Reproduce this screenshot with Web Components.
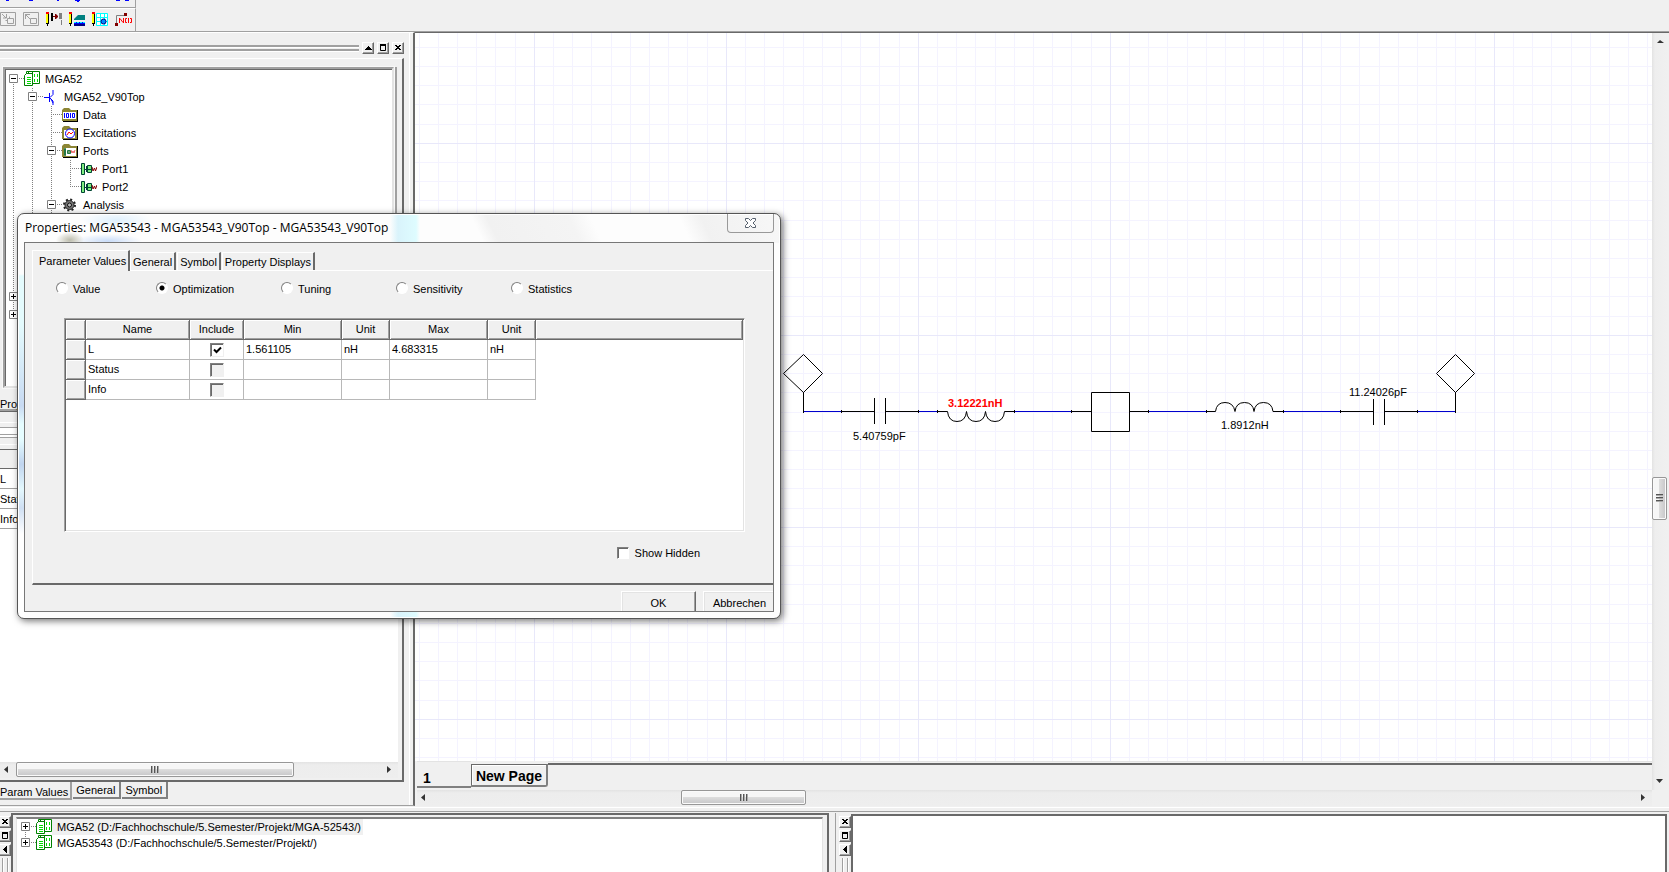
<!DOCTYPE html>
<html lang="de">
<head>
<meta charset="utf-8">
<title>MGA52 - Schematic Editor</title>
<style>
html, body { margin: 0; height: 100%; }
body { overflow: hidden; background: #f0f0f0; color: #000; font: 11px/18px "Liberation Sans", sans-serif; }
</style>
</head>
<body>
<schematic-app></schematic-app>
<script>
const define = (name, html, setup) => {
  const tpl = document.createElement('template');
  tpl.innerHTML = html;
  customElements.define(name, class extends HTMLElement {
    connectedCallback() {
      if (this.shadowRoot) return;
      this.attachShadow({ mode: 'open' }).append(tpl.content.cloneNode(true));
      if (setup) setup.call(this, this.shadowRoot);
    }
  });
};

/* 16px icons used by the trees */
const ICONS = {
  project: `<path fill="#fff" stroke="#008000" d="M2.500 3V.5h13v12H9"/><path fill="#fff" stroke="#008000" d="M.5 4.500l2-2h6v12h-8z"/><path fill="none" stroke="#00e000" d="M3 6.500h4M3 8.500h4M3 10.500h4M3 12.500h4M10.500 3v3M13.500 3v3M10.500 8v3M13.500 8v3"/><path fill="none" stroke="#008000" d="M4.500 2.500V.5h4v4"/>`,
  design: `<path fill="none" stroke="#00f" d="M1 8.500h5M6.500 4v9M7 8.500l3-3V1M7 9l3 3v4M8 10l2 4"/>`,
  data: `<path fill="#8c8534" d="M0 3L2 1h5l2 2h6v11H0z"/><path fill="#fff" d="M1 5h13v7H1z"/><path stroke="#000" fill="none" d="M15.500 3v12M1 14.500h15"/><path fill="none" stroke="#00f" d="M2.500 6v5M4.500 6.500h2v4h-2zM8.500 6v5M10.500 6.500h2v4h-2z"/>`,
  excite: `<path fill="#8c8534" d="M0 3L2 1h5l2 2h6v11H0z"/><path fill="#fff" d="M2 5h11v8H2z"/><path stroke="#000" fill="none" d="M15.500 3v12M1 14.500h15"/><circle cx="8" cy="8.500" r="4.500" fill="#fff" stroke="#00f"/><path fill="none" stroke="#f00" d="M5 10l2-3 2 2 2-2"/>`,
  ports: `<path fill="#8c8534" d="M0 3L2 1h5l2 2h6v11H0z"/><path fill="#fff" d="M2 5h12v8H2z"/><path stroke="#000" fill="none" d="M15.500 3v12M1 14.500h15"/><path fill="#6c9f6c" stroke="#274" d="M2.500 5.500h1v7h-1zM5.500 7.500h3v3h-3z"/><path fill="none" stroke="#e66" d="M9 7l1 3 1-2 1 2 1-3"/>`,
  port: `<path fill="#7fef7f" stroke="#043" d="M.5 2.500h3v11h-3z"/><path stroke="#043" d="M4 8.500h2"/><path fill="#7fef7f" stroke="#043" d="M6.500 4.500h4v7h-4z"/><path stroke="#043" fill="none" d="M5.500 5v6M6 8.500h4"/><path fill="none" stroke="#800000" d="M11 6l1 4 1.500-3 1 3L16 6"/>`,
  gear: `<circle cx="7.500" cy="8" r="5.500" fill="none" stroke="#222" stroke-width="2" stroke-dasharray="2 2.320"/><circle cx="7.500" cy="8" r="4.500" fill="#777" stroke="#222"/><circle cx="7.500" cy="8" r="2" fill="#bbb" stroke="#111"/>`
};
const svg = (w, h, body) => `<svg width="${w}" height="${h}" viewBox="0 0 ${w} ${h}">${body}</svg>`;

/* ---------- small parts ---------- */
define('cap-button', `<style>
:host { display: block; width: 12px; height: 12px; }
button { box-sizing: border-box; display: block; width: 12px; height: 12px; padding: 0; background: #f0f0f0; border: 1px solid; border-color: #fff #696969 #696969 #fff; box-shadow: inset -1px -1px #a0a0a0; }
svg { display: block; }
</style><button type="button"></button>`, function (r) {
  const shapes = {
    up: '<path d="M5 3h1v1h1v1h1v1h1v1H2V6h1V5h1V4h1z"/>',
    max: '<path fill="none" stroke="#000" d="M2.500 2.500h5v5h-5z"/><path d="M2 1h6v2H2z"/>',
    close: '<path d="M2 2h2v1h2V2h2v1H7v1H6v1h1v1h1v1H6V6H4v1H2V6h1V5h1V4H3V3H2z"/>',
    left: '<path d="M7 1v7H6V7H5V6H4V5H3V4h1V3h1V2h1V1z"/>'
  };
  const b = r.querySelector('button');
  b.setAttribute('aria-label', this.getAttribute('kind'));
  b.innerHTML = svg(10, 10, shapes[this.getAttribute('kind')]);
});

define('scroll-bar', `<style>
:host { display: flex; height: 16px; background: linear-gradient(#e3e3e3, #ededed 3px, #eee); }
:host([vertical]) { flex-direction: column; width: 16px; height: auto; background: linear-gradient(90deg, #e3e3e3, #eee 3px, #f0f0f0); }
button { all: unset; flex: none; width: 16px; height: 16px; }
svg { display: block; }
.a { flex: var(--before, 0) 1 0px; } .b { flex: var(--after, 1) 1 0px; }
.thumb { flex: none; box-sizing: border-box; width: var(--size); height: 15px; border: 1px solid #979797; border-radius: 2px; background: linear-gradient(#f6f6f6 48%, #dcdcdc 50%, #c6c6c8); box-shadow: inset 0 0 0 1px #fafafa; display: flex; align-items: center; justify-content: center; }
:host([vertical]) .thumb { width: 15px; height: var(--size); background: linear-gradient(90deg, #f6f6f6 48%, #dcdcdc 50%, #c6c6c8); }
.grip { width: 8px; height: 7px; background: repeating-linear-gradient(90deg, #555 0 1px, #aaa 1px 2px, transparent 2px 3px); }
:host([vertical]) .grip { width: 7px; height: 8px; background: repeating-linear-gradient(#555 0 1px, #aaa 1px 2px, transparent 2px 3px); }
</style><button type="button" aria-label="Back"></button><span class="a"></span><span class="thumb"><span class="grip"></span></span><span class="b"></span><button type="button" aria-label="Forward"></button>`, function (r) {
  const [p, n] = r.querySelectorAll('button');
  const v = this.hasAttribute('vertical');
  p.innerHTML = svg(16, 16, `<path fill="#333" d="${v ? 'M5 10l3-3 4 3z' : 'M8 4v7L4 7.500z'}"/>`);
  n.innerHTML = svg(16, 16, `<path fill="#333" d="${v ? 'M4 5h7L7.500 9z' : 'M5 4v7l4-3.500z'}"/>`);
});

define('tree-item', `<style>
:host { display: flex; height: var(--row, 18px); line-height: var(--row, 18px); align-items: center; white-space: nowrap; }
.art { display: flex; flex: none; align-items: center; }
svg { flex: none; display: block; }
.text { padding: 0 2px 0 5px; }
:host([selected]) .text { background: #f0f0f0; }
</style><span class="art"></span><span class="text"><slot></slot></span>`, function (r) {
  const line = d => `<path fill="none" stroke="#808080" stroke-dasharray="1 1" d="${d}"/>`;
  const box = plus => `<path fill="#fff" stroke="#808080" d="M4.500 4.500h8v8h-8z"/><path stroke="#000" d="M6 8.500h5${plus ? 'M8.500 6v5' : ''}"/>`;
  const kinds = {
    '|': line('M8.500 0v18'), 't': line('M8.500 0v18M8 8.500h11'), 'l': line('M8.500 0v9M8 8.500h11'),
    '-': line('M8.500 0v18M8 8.500h11') + box(false), '+': line('M8.500 0v18M8 8.500h11') + box(true),
    'r': line('M8.500 8v10M8 8.500h11') + box(false), 'R': line('M8.500 8v10M8 8.500h11') + box(true),
    'L': line('M8.500 0v9M8 8.500h11') + box(true)
  };
  const guides = [...this.getAttribute('guides')].map(c => svg(19, 18, kinds[c])).join('');
  const icon = ICONS[this.getAttribute('icon')];
  r.querySelector('.art').innerHTML = guides + (icon ? svg(16, 16, icon) : '');
});

/* ---------- toolbar ---------- */
define('tool-bar', `<style>
:host { display: block; height: 31px; border-bottom: 1px solid #a0a0a0; }
.strip { width: 135px; border-right: 1px solid #a0a0a0; }
.top { height: 7px; border-bottom: 1px solid #a0a0a0; }
.row { height: 20px; padding-top: 2px; border-top: 1px solid #fff; display: flex; gap: 7px; align-items: flex-start; }
button { all: unset; width: 16px; height: 16px; } svg { display: block; overflow: visible; }
</style>
<div class="strip top"><svg width="135" height="7"><path fill="#00f" d="M6 0h3v1H6zM29 0h4v1h-4zM57 0h2v1h-2zM75 0h5v1h-5zM77 1h2v1h-2zM116 0h4v1h-4zM125 0h4v1h-4z"/></svg></div>
<div class="strip row">
<button type="button" aria-label="Push down"><svg width="16" height="16"><path fill="none" stroke="#a0a0a0" d="M.5 1.500h15v13H.5zM7.500 7.500h6v5h-6zM5.500 9.500h2M9.500 5.500v2M2 3l4 4M6.500 3v4H3"/></svg></button>
<button type="button" aria-label="Pop up"><svg width="16" height="16"><path fill="none" stroke="#a0a0a0" d="M.5 1.500h15v13H.5zM7.500 7.500h6v5h-6zM2 3l5 5M2.500 8V3.500H7"/></svg></button>
<button type="button" aria-label="Edit port"><svg width="17" height="16"><path fill="#f00" d="M0 1h3v2H0z"/><path fill="#ff0" d="M0 3h3v9H0z"/><path fill="#000" d="M2 3h1v9H2zM0 12h3v1H2v2H1v-2H0zM5 2h2v8H5z"/><path fill="#808080" d="M13 2h3v6h-3zM15 9h1v5h-1z"/><path fill="#800000" d="M7 5h5v1H7zM9 3h1l2 2v1l-2 2H9z"/></svg></button>
<button type="button" aria-label="Edit layer"><svg width="17" height="16"><path fill="#f00" d="M0 1h3v2H0z"/><path fill="#ff0" d="M0 3h3v9H0z"/><path fill="#000" d="M2 3h1v9H2zM0 12h3v1H2v2H1v-2H0z"/><path fill="#008080" d="M5 9v-1l4-4h7v5z"/><path fill="#00f" d="M5 11h11v4H5z"/><path stroke="#0ff" stroke-dasharray="2 1" d="M5 11.500h11"/><path stroke="#000080" stroke-width="2" d="M5 14h11"/></svg></button>
<button type="button" aria-label="Edit grid"><svg width="17" height="16"><path fill="#f00" d="M0 1h3v2H0z"/><path fill="#ff0" d="M0 3h3v9H0z"/><path fill="#000" d="M2 3h1v9H2zM0 12h3v1H2v2H1v-2H0z"/><path fill="#fff" stroke="#0ff" d="M4.500 2.500h11v12h-11zM8.500 2v12M12.500 2v12M4 6.500h12M4 10.500h12"/><circle cx="11.500" cy="10.500" r="2.500" fill="#08f" stroke="#000080"/></svg></button>
<button type="button" aria-label="Net name"><svg width="17" height="16"><path fill="none" stroke="#808080" d="M1.500 13V4.500H10"/><path fill="#800000" d="M0 12h3v3H0zM9 2h3v3H9z"/><path fill="none" stroke="#f00" d="M4.500 12V7M5 7.500l3 4M8.500 12V7M12 7.500h-1.500v4H12M13.500 7v5M15 7.500h1.500v4H15"/></svg></button>
</div>`);

/* ---------- left dock ---------- */
define('side-dock', `<style>
:host { display: flex; flex-direction: column; border-top: 1px solid #fff; min-height: 0; border-right: 2px solid #696969; box-shadow: inset -3px 0 #f0f0f0, inset -4px 0 #fff; padding-right: 9px; border-bottom: 1px solid #a0a0a0; }
.grip { height: 25px; display: flex; align-items: center; gap: 3px; padding-top: 4px; box-sizing: border-box; }
.bars { flex: 1; height: 2px; border: solid #a0a0a0; border-width: 2px 0; box-shadow: inset 0 1px #fff, 0 1px #fff; }
.upper { flex: 0 0 330px; box-sizing: border-box; border-top: 1px solid #fff; border-right: 2px solid #696969; padding: 8px 8px 0 3px; display: flex; flex-direction: column; }
.tree { flex: 1; background: #fff; border: 2px solid; border-color: #a0a0a0 #e3e3e3 #e3e3e3 #a0a0a0; box-shadow: 0 0 0 1px #f8f8f8, inset 1px 1px #696969, 3px 0 #a0a0a0; overflow: hidden; padding-top: 1px; }
.tree tree-item:nth-child(n+9) { margin-bottom: 0; }
.tree .gap { --row: 19px; }
.tabs { display: flex; flex: none; align-items: flex-start; }
.tabs button { all: unset; box-sizing: border-box; height: 17px; line-height: 16px; padding: 0 4px 0 3px; margin-right: 1px; border: solid #808080; border-width: 0 2px 2px 0; white-space: nowrap; }
.tabs .on { padding: 1px 2px 0 0; height: 18px; line-height: 18px; border-color: #a0a0a0; }
.project .on { height: 23px; padding-top: 7px; }
.split { flex: none; height: 38px; box-sizing: border-box; border-top: 1px solid #696969; background: linear-gradient(transparent 10px, #fff 10px 11px, transparent 11px 15px, #a0a0a0 15px 16px, #fff 16px 22px, #a0a0a0 22px 23px, #fff 23px 25px, #a0a0a0 25px 26px, transparent 26px 32px, #fff 32px 33px, transparent 33px); }
.lower { flex: 1; min-height: 0; display: flex; flex-direction: column; border: solid #696969; border-width: 1px 2px 2px 0; padding-right: 4px; }
.values { flex: 1; background: #fff; }
table { border-collapse: collapse; width: 100%; table-layout: fixed; }
td, th { height: 19px; padding: 0; border-bottom: 1px solid #a0a0a0; text-align: left; font-weight: normal; line-height: 18px; }
th { background: #f0f0f0; border-bottom: 1px solid #696969; height: 18px; }
.end { height: 2px; } .foot { height: 23px; }
</style>
<div class="grip"><span class="bars"></span><cap-button kind="up"></cap-button><cap-button kind="max"></cap-button><cap-button kind="close"></cap-button></div>
<div class="upper"><div class="tree">
<tree-item guides="r" icon="project">MGA52</tree-item>
<tree-item guides="|-" icon="design">MGA52_V90Top</tree-item>
<tree-item guides="||t" icon="data">Data</tree-item>
<tree-item guides="||t" icon="excite">Excitations</tree-item>
<tree-item guides="||-" icon="ports">Ports</tree-item>
<tree-item guides="|||t" icon="port">Port1</tree-item>
<tree-item guides="|||l" icon="port">Port2</tree-item>
<tree-item guides="||-" icon="gear">Analysis</tree-item>
<tree-item class="gap" guides="|||"></tree-item><tree-item class="gap" guides="|||"></tree-item><tree-item guides="|"></tree-item><tree-item guides="|"></tree-item>
<tree-item guides="+"></tree-item><tree-item guides="L"></tree-item>
</div></div>
<div class="tabs project"><button type="button" class="on">Project</button></div>
<div class="split"></div>
<div class="lower"><div class="values"><table><thead><tr><th></th></tr></thead><tbody><tr><td>L</td></tr><tr><td>Status</td></tr><tr><td>Info</td></tr></tbody></table></div>
<scroll-bar style="--size:278px"></scroll-bar><span class="end"></span></div>
<div class="tabs foot"><button type="button" class="on">Param Values</button><button type="button">General</button><button type="button">Symbol</button></div>`);

/* ---------- schematic ---------- */
const schematic = (() => {
  const steps = [19, 38, 57, 77, 96, 115, 134, 153, 173];
  const minor = steps.map(s => `M${s}.5 0v192M0 ${s}.5h192`).join('');
  return `<svg class="sheet" width="100%" height="100%" role="img" aria-label="Schematic">
<defs><pattern id="grid" width="192" height="192" x="119" y="110" patternUnits="userSpaceOnUse"><path stroke="#f4f3ff" d="${minor}"/><path stroke="#e8e8fa" d="M.5 0v192M0 .5h192"/></pattern></defs>
<rect width="100%" height="100%" fill="url(#grid)"/>
<g transform="translate(-415 -33)" fill="none" stroke="#000">
<path stroke="#00c" d="M804 411.500h38M918 411.500h20M1014 411.500h58M1148 411.500h67M1283 411.500h58M1417 411.500h39"/>
<path d="M783.500 373.500l20-19 19 19-19 19zM803.500 392v20M841 411.500h33M874.500 398v26M885.500 398v26M886 411.500h33M937 411.500h10.500q1 10 9.500 10t9.500-10q1 10 9.500 10t9.500-10q1 10 9.500 10t9.500-10h10M1071 411.500h20M1091.500 392.500h38v39h-38zM1130 411.500h19M1206 411.500h9.500q1-9 9.500-9t10 9q1-9 9.500-9t9.500 9q1-9 9.500-9t9.500 9h11M1340 411.500h33M1373.500 399v26M1384.500 399v26M1385 411.500h33M1455.500 412v-20M1436.500 373.500l19-19 19 19-19 19z"/>
<path stroke-width="3" d="M841 411.500h1M918 411.500h1M937 411.500h1M1014 411.500h1M1071 411.500h1M1148 411.500h1M1206 411.500h1M1283 411.500h1M1340 411.500h1M1417 411.500h1M1455 411.500h1M803 411.500h1"/>
<g fill="#000" stroke="none"><text x="853" y="440">5.40759pF</text><text x="948" y="407" fill="#f00" font-weight="bold">3.12221nH</text><text x="1221" y="429">1.8912nH</text><text x="1349" y="396">11.24026pF</text></g>
</g></svg>`;
})();

define('schematic-view', `<style>
:host { display: grid; grid-template: minmax(0, 1fr) 29px 16px / minmax(0, 1fr) 17px; border-top: 1px solid #696969; min-height: 0; box-sizing: border-box; }
.sheet { display: block; grid-area: 1 / 1; background: #fff; font: 11px "Liberation Sans", sans-serif; }
.v { grid-area: 1 / 2 / 3 / 3; }
.h { grid-area: 3 / 1; margin-left: 2px; }
.pages { grid-area: 2 / 1; display: flex; margin-left: 2px; font: bold 14px/22px "Liberation Sans", sans-serif; }
button { all: unset; box-sizing: border-box; }
.one { width: 54px; height: 27px; padding: 5px 0 0 6px; border-top: 1px solid #e3e3e3; border-bottom: 2px solid #808080; }
.new { width: 77px; height: 23px; margin-top: 3px; line-height: 23px; text-align: center; border: solid; border-width: 1px 2px 2px 1px; border-color: #696969 #808080 #808080 #696969; box-shadow: inset 1px 1px #fff; border-radius: 0 0 3px 0; }
.rest { flex: 1; border-top: 1px solid #e3e3e3; box-shadow: inset 0 1px #f0f0f0, inset 0 3px #696969; }
</style>${schematic}
<scroll-bar class="v" vertical style="--before:427;--after:254;--size:43px"></scroll-bar>
<div class="pages"><button type="button" class="one">1</button><button type="button" class="new">New Page</button><span class="rest"></span></div>
<scroll-bar class="h" style="--before:248;--after:830;--size:125px"></scroll-bar>`);

/* ---------- bottom docks ---------- */
define('bottom-dock', `<style>
:host { display: flex; min-width: 0; overflow: hidden; }
.caps { flex: none; width: 12px; display: flex; flex-direction: column; gap: 2px; padding-top: 3px; }
.bars { flex: 1; width: 4px; margin-left: 3px; border: solid #a0a0a0; border-width: 0 1px; box-shadow: inset 1px 0 #fff, 1px 0 #fff; }
.frame { flex: 1; min-width: 0; display: flex; border: solid #696969; border-width: 2px 2px 0; margin-top: 1px; }
:host([framed]) .frame { padding: 2px 4px 0 3px; margin-top: 0; }
.list { flex: 1; min-width: 0; overflow: hidden; background: #fff; }
:host([framed]) .list { border: solid; border-width: 2px 1px 0; border-color: #808080 #e3e3e3; }
</style><div class="caps"><cap-button kind="close"></cap-button><cap-button kind="max"></cap-button><cap-button kind="left"></cap-button><span class="bars"></span></div>
<div class="frame"><div class="list"><slot></slot></div></div>`);

/* ---------- dialog ---------- */
define('value-grid', `<style>
:host { display: block; box-sizing: border-box; background: #fff; border: 1px solid; border-color: #a0a0a0 #fff #fff #a0a0a0; box-shadow: inset 1px 1px #696969, inset -1px -1px #e3e3e3; padding: 1px; }
table { border-collapse: separate; border-spacing: 0; table-layout: fixed; width: 100%; }
th, td { box-sizing: border-box; height: 20px; padding: 0 2px; line-height: 17px; font-weight: normal; text-align: left; border: solid #b8b8b8; border-width: 0 1px 1px 0; white-space: nowrap; overflow: hidden; }
th { background: #f0f0f0; text-align: center; border-color: #696969; box-shadow: inset 1px 1px #fff, inset -1px -1px #a0a0a0; }
td:last-child { border: 0; }
input { appearance: none; display: block; margin: 0 auto; box-sizing: border-box; width: 14px; height: 14px; background: #fff; border: 1px solid; border-color: #808080 #f0f0f0 #f0f0f0 #808080; box-shadow: inset 1px 1px #696969; }
input:disabled { background: #f0f0f0; }
input:checked { background: #fff url('data:image/svg+xml,<svg xmlns="http://www.w3.org/2000/svg" width="12" height="12"><path fill="none" stroke="black" stroke-width="2" d="M3 5.500l2.500 2.500L10 3.500"/></svg>'); }
</style><table><colgroup><col style="width:20px"><col style="width:104px"><col style="width:54px"><col style="width:98px"><col style="width:48px"><col style="width:98px"><col style="width:48px"><col></colgroup>
<thead><tr><th></th><th>Name</th><th>Include</th><th>Min</th><th>Unit</th><th>Max</th><th>Unit</th><th></th></tr></thead>
<tbody><tr><th></th><td>L</td><td><input type="checkbox" checked aria-label="Include L"></td><td>1.561105</td><td>nH</td><td>4.683315</td><td>nH</td><td></td></tr>
<tr><th></th><td>Status</td><td><input type="checkbox" disabled aria-label="Include Status"></td><td></td><td></td><td></td><td></td><td></td></tr>
<tr><th></th><td>Info</td><td><input type="checkbox" disabled aria-label="Include Info"></td><td></td><td></td><td></td><td></td><td></td></tr></tbody></table>`);

define('property-dialog', `<style>
:host { display: flex; flex-direction: column; box-sizing: border-box; border: 1px solid #555; border-radius: 7px; padding: 0 6px 6px; box-shadow: 2px 2px 7px rgba(0,0,0,.55), inset 0 0 0 1px #fff;
 background: linear-gradient(#fff0 60px, #e4fbfd 62px, #e4fbfd 110px, #c8daf2 192px, #e6fdff 210px, #e6fdff 225px, #c0d4ee 250px, #e4f8fd 275px, #cfdff2 294px, #fff 320px) left / 6px 100% no-repeat,
 radial-gradient(14px 8px at 52px 26px, #bcbcac, #fff0) no-repeat,
 radial-gradient(34px 7px at 90px 27px, #c9dcf8, #fff0) no-repeat,
 radial-gradient(36px 9px at 98px 6px, #dff0fd, #fff0) no-repeat,
 linear-gradient(90deg, #fff0 372px, #d9f3fb 380px, #defcff 398px, #fff0 402px) no-repeat,
 linear-gradient(65deg, #fff0 422px, #f1f1f1 436px, #f4f4f4 510px, #fff0 530px, #fff0 610px, #f1f1f1 630px, #f7f7f7 700px) top / 100% 29px no-repeat, #fdfdfd; }
header { display: flex; height: 28px; justify-content: space-between; align-items: flex-start; font: 12px/27px "Open Sans", "Noto Sans", sans-serif; padding-left: 1px; }
h1 { font: inherit; margin: 0; white-space: nowrap; }
button { all: unset; box-sizing: border-box; }
.x { width: 47px; height: 19px; border: 1px solid #999; border-top: 0; border-radius: 0 0 4px 4px; display: flex; align-items: center; justify-content: center; }
.client { flex: 1; min-height: 0; display: flex; flex-direction: column; background: #f0f0f0; border: 1px solid #777; overflow: hidden; padding-top: 7px; }
.tabs { display: flex; align-items: flex-end; height: 20px; padding-left: 7px; flex: none; }
.tabs button { height: 18px; line-height: 18px; padding: 0 2px; margin-right: 1px; border: solid; border-width: 1px 2px 0 1px; border-color: #fff #696969 #fff #fff; white-space: nowrap; flex: none; }
.tabs .on { height: 21px; line-height: 18px; margin: 0 0 -1px; width: 98px; padding: 0 0 0 6px; position: relative; background: #f0f0f0; }
.page { flex: 1; margin-left: 7px; border: solid; border-width: 1px 0 2px 1px; border-color: #fff #fff #696969 #fff; padding: 6px 28px 0 31px; display: flex; flex-direction: column; }
.modes { display: grid; grid-template-columns: 100px 125px 115px 115px 1fr; margin-left: -8px; height: 23px; }
label { display: flex; align-items: center; gap: 6px; white-space: nowrap; }
.modes label { gap: 5px; }
input { appearance: none; box-sizing: border-box; width: 12px; height: 12px; margin: 0; background: #fff; border: 1px solid; border-color: #808080 #fff #fff #808080; }
input[type=radio] { border-radius: 50%; margin-top: -2px; }
input[type=radio]:checked { background: radial-gradient(circle at 50% 50%, #000 2px, #fff 3px); }
value-grid { flex: 0 0 214px; margin-top: 18px; }
.hidden { align-self: flex-end; margin: 12px 45px 0 0; }
.hidden input { box-shadow: inset 1px 1px #696969; }
footer { flex: none; display: flex; justify-content: flex-end; gap: 7px; height: 26px; padding-top: 6px; box-sizing: border-box; }
footer button { width: 75px; height: 24px; line-height: 18px; text-align: center; border: 1px solid #fff; border-right: 1px solid #696969; box-shadow: inset -1px 0 #a0a0a0, inset 1px 1px #e3e3e3; }
footer button:last-child { border-right: 0; width: 70px; padding-left: 2px; box-shadow: inset 1px 1px #e3e3e3; }
</style>
<header><h1>Properties: MGA53543 - MGA53543_V90Top - MGA53543_V90Top</h1><button type="button" class="x" aria-label="Close"><svg width="13" height="12"><path fill="#fff" stroke="#555f6c" stroke-width="1" d="M1.500 1.500h3l2 2 2-2h3v2L9 6l2.500 2.500v2h-3l-2-2-2 2h-3v-2L4 6 1.500 3.500z"/></svg></button></header>
<div class="client">
<div class="tabs"><button type="button" class="on">Parameter Values</button><button type="button">General</button><button type="button">Symbol</button><button type="button">Property Displays</button></div>
<div class="page">
<div class="modes"><label><input type="radio" name="mode">Value</label><label><input type="radio" name="mode" checked>Optimization</label><label><input type="radio" name="mode">Tuning</label><label><input type="radio" name="mode">Sensitivity</label><label><input type="radio" name="mode">Statistics</label></div>
<value-grid></value-grid>
<label class="hidden"><input type="checkbox">Show Hidden</label>
</div>
<footer><button type="button">OK</button><button type="button">Abbrechen</button></footer>
</div>`);

/* ---------- application ---------- */
define('schematic-app', `<style>
:host { display: grid; grid-template: 32px minmax(0, 1fr) 65px / 100%; height: 100vh; overflow: hidden; position: relative; }
.work { display: grid; grid-template-columns: 415px minmax(0, 1fr); min-height: 0; padding-bottom: 1px; }
.docks { display: flex; gap: 6px; border-top: 1px solid #fff; padding-right: 2px; min-height: 0; overflow: hidden; background: linear-gradient(transparent 3px, #a0a0a0 3px 4px, transparent 4px); }
.docks > :first-child { flex: 0 0 calc(50% - 4px); margin: 5px 0 0 -1px; --row: 16px; }
.docks > :last-child { flex: 1; margin-top: 5px; border-left: 1px solid #a0a0a0; padding-left: 3px; }
property-dialog { position: absolute; left: 17px; top: 213px; width: 764px; height: 406px; }
</style>
<tool-bar></tool-bar>
<div class="work"><side-dock></side-dock><schematic-view></schematic-view></div>
<div class="docks">
<bottom-dock framed><tree-item guides="R" icon="project" selected>MGA52 (D:/Fachhochschule/5.Semester/Projekt/MGA-52543/)</tree-item><tree-item guides="L" icon="project">MGA53543 (D:/Fachhochschule/5.Semester/Projekt/)</tree-item></bottom-dock>
<bottom-dock></bottom-dock>
</div>
<property-dialog></property-dialog>`);
</script>
</body>
</html>
